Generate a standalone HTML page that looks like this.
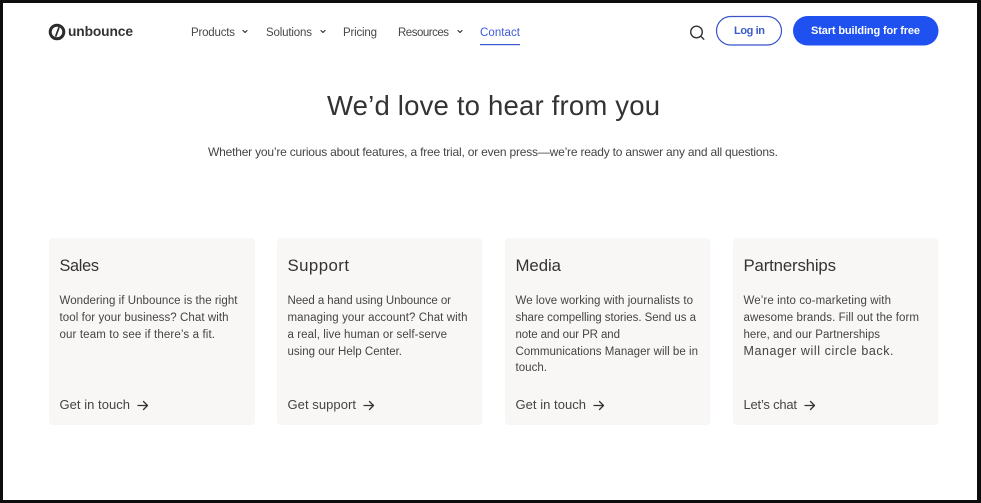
<!DOCTYPE html>
<html lang="en">
<head>
<meta charset="utf-8">
<title>Contact | Unbounce</title>
<style>
html,body{margin:0;padding:0;width:981px;height:503px;overflow:hidden;background:#0d0d0d}
svg{display:block;filter:blur(.25px)}
text{font-family:"Liberation Sans",sans-serif;fill:#3c3c3c}
.n{font-size:11.5px;fill:#484848}
.p{font-size:11.5px;fill:#444}
.t{font-size:16.8px;fill:#333}
.l{font-size:13px;fill:#444}
.i{fill:none;stroke:#333;stroke-linecap:round;stroke-linejoin:round}
</style>
</head>
<body>
<svg width="981" height="503" viewBox="0 0 981 503" xmlns="http://www.w3.org/2000/svg">
<rect x="3" y="3" width="974" height="497" fill="#fff"/>

<!-- logo -->
<circle cx="57" cy="32" r="6.800" fill="none" stroke="#2b2b2b" stroke-width="3"/>
<path d="M59 27.300 L55.600 36.700" stroke="#2b2b2b" stroke-width="1.700" fill="none"/>
<text x="68" y="36" font-size="13.800" font-weight="700" style="fill:#333" textLength="65" lengthAdjust="spacing">unbounce</text>

<!-- nav -->
<text class="n" x="191" y="36" textLength="44" lengthAdjust="spacing">Products</text>
<path class="i" stroke-width="1.2" d="M243 30.500l2 2 2-2"/>
<text class="n" x="266" y="36" textLength="46" lengthAdjust="spacing">Solutions</text>
<path class="i" stroke-width="1.2" d="M321 30.500l2 2 2-2"/>
<text class="n" x="343" y="36" textLength="34" lengthAdjust="spacing">Pricing</text>
<text class="n" x="398" y="36" textLength="51" lengthAdjust="spacing">Resources</text>
<path class="i" stroke-width="1.2" d="M458 30.500l2 2 2-2"/>
<text class="n" x="480" y="36" textLength="40" lengthAdjust="spacing" style="fill:#3d5bd6">Contact</text>
<rect x="480" y="44" width="40" height="1.2" fill="#3d57cf"/>

<!-- search -->
<circle cx="696.500" cy="32" r="5.800" class="i" stroke-width="1.4"/>
<path class="i" stroke-width="1.4" d="M700.800 36.300l3 3"/>

<!-- buttons -->
<rect x="716.500" y="16.500" width="65" height="28.500" rx="14.200" fill="#fff" stroke="#3a55c8" stroke-width="1.2"/>
<text x="734" y="34" font-size="11" font-weight="700" style="fill:#3a5bc8" textLength="31" lengthAdjust="spacing">Log in</text>
<rect x="793" y="16" width="145.500" height="29.500" rx="14.700" fill="#1f50f0"/>
<text x="811" y="34" font-size="11" font-weight="700" style="fill:#fff" textLength="109" lengthAdjust="spacing">Start building for free</text>

<!-- heading -->
<text x="327" y="115" font-size="27.500" style="fill:#333" textLength="333" lengthAdjust="spacing">We’d love to hear from you</text>
<text x="208" y="156" font-size="12" style="fill:#444" textLength="570" lengthAdjust="spacing">Whether you’re curious about features, a free trial, or even press—we’re ready to answer any and all questions.</text>

<!-- cards -->
<rect x="49" y="238" width="206" height="187" rx="4" fill="#f8f7f5"/>
<rect x="277" y="238" width="205.500" height="187" rx="4" fill="#f8f7f5"/>
<rect x="505" y="238" width="205.500" height="187" rx="4" fill="#f8f7f5"/>
<rect x="733" y="238" width="205.500" height="187" rx="4" fill="#f8f7f5"/>

<!-- Sales -->
<text class="t" x="59.500" y="271" textLength="39.500" lengthAdjust="spacing" style="font-size:16.300px">Sales</text>
<text class="p" x="59.500" y="304" textLength="178" lengthAdjust="spacing">Wondering if Unbounce is the right</text>
<text class="p" x="59.500" y="321" textLength="169" lengthAdjust="spacing">tool for your business? Chat with</text>
<text class="p" x="59.500" y="338" textLength="155.500" lengthAdjust="spacing">our team to see if there’s a fit.</text>
<text class="l" x="59.500" y="409" textLength="70.500" lengthAdjust="spacing">Get in touch</text>
<path class="i" stroke-width="1.3" d="M138 405.500h9.500M143.500 401.500l4 4-4 4"/>

<!-- Support -->
<text class="t" x="287.500" y="271" textLength="61.500" lengthAdjust="spacing">Support</text>
<text class="p" x="287.500" y="304" textLength="163.500" lengthAdjust="spacing">Need a hand using Unbounce or</text>
<text class="p" x="287.500" y="321" textLength="180" lengthAdjust="spacing">managing your account? Chat with</text>
<text class="p" x="287.500" y="338" textLength="159.500" lengthAdjust="spacing">a real, live human or self-serve</text>
<text class="p" x="287.500" y="355" textLength="114.500" lengthAdjust="spacing">using our Help Center.</text>
<text class="l" x="287.500" y="409" textLength="68.500" lengthAdjust="spacing">Get support</text>
<path class="i" stroke-width="1.3" d="M364 405.500h9.500M369.500 401.500l4 4-4 4"/>

<!-- Media -->
<text class="t" x="515.500" y="271" textLength="45.500" lengthAdjust="spacing">Media</text>
<text class="p" x="515.500" y="304" textLength="177.500" lengthAdjust="spacing">We love working with journalists to</text>
<text class="p" x="515.500" y="321" textLength="180.500" lengthAdjust="spacing">share compelling stories. Send us a</text>
<text class="p" x="515.500" y="338" textLength="104.500" lengthAdjust="spacing">note and our PR and</text>
<text class="p" x="515.500" y="355" textLength="182.500" lengthAdjust="spacing">Communications Manager will be in</text>
<text class="p" x="515.500" y="371" textLength="31.500" lengthAdjust="spacing">touch.</text>
<text class="l" x="515.500" y="409" textLength="70.500" lengthAdjust="spacing">Get in touch</text>
<path class="i" stroke-width="1.3" d="M594 405.500h9.500M599.500 401.500l4 4-4 4"/>

<!-- Partnerships -->
<text class="t" x="743.500" y="271" textLength="92.500" lengthAdjust="spacing">Partnerships</text>
<text class="p" x="743.500" y="304" textLength="147.500" lengthAdjust="spacing">We’re into co-marketing with</text>
<text class="p" x="743.500" y="321" textLength="175.500" lengthAdjust="spacing">awesome brands. Fill out the form</text>
<text class="p" x="743.500" y="338" textLength="136.500" lengthAdjust="spacing">here, and our Partnerships</text>
<text class="p" x="743.500" y="355" textLength="150" lengthAdjust="spacing" style="font-size:12.500px">Manager will circle back.</text>
<text class="l" x="743.500" y="409" textLength="53.500" lengthAdjust="spacing">Let’s chat</text>
<path class="i" stroke-width="1.3" d="M805 405.500h9.500M810.500 401.500l4 4-4 4"/>
</svg>
</body>
</html>
